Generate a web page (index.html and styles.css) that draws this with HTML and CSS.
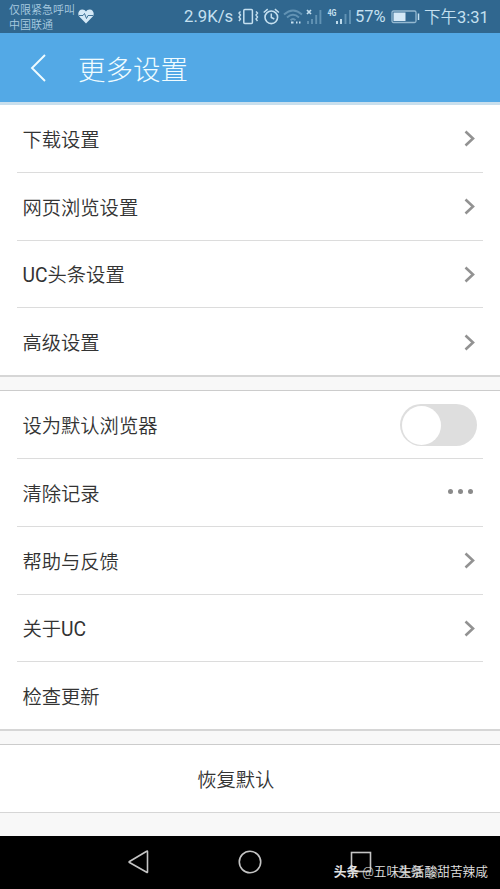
FILE: index.html
```html
<!DOCTYPE html>
<html lang="zh-CN">

<head>
    <meta charset="UTF-8">
    <meta name="viewport" content="width=device-width, initial-scale=1.0">
    <title>更多设置</title>
    <link rel="stylesheet" href="styles.css">
</head>

<body>
    <!-- Status bar -->
    <div class="status-bar">
        <div class="carrier">
            <div>仅限紧急呼叫</div>
            <div>中国联通</div>
        </div>
        <svg class="heart" width="16" height="15" viewBox="0 0 16 15">
            <path d="M8 14.5 1.2 7.5C-1 4.5 1 .5 4.3.5 6 .5 7.3 1.3 8 2.5 8.7 1.3 10 .5 11.7.5 15 .5 17 4.5 14.8 7.5Z" fill="#d4e8f6"/>
            <path d="M1 6.5h4l1.5-2 2 5 1.500-3h5" fill="none" stroke="#30678f" stroke-width="0.9"/>
        </svg>
        <span class="speed">2.9K/s</span>
        <svg class="status-icons" width="116" height="24" viewBox="238 5 116 24" fill="none" stroke="#c5e0f0">
            <!-- vibrate -->
            <rect x="243.8" y="9.5" width="8.6" height="14" rx="1" stroke-width="1.5"/>
            <path d="M240.5 11.5l-1.5 1.5 1.5 2-1.5 2 1.5 2-1.5 2M256 11.5l1.5 1.5-1.5 2 1.5 2-1.5 2 1.5 2" stroke-width="1.4"/>
            <!-- alarm -->
            <circle cx="271.3" cy="17.3" r="6.3" stroke-width="1.6"/>
            <path d="M263.700 12.500l4-3.300M278.900 12.500l-4-3.300M271.300 13.500v4l3 1.500" stroke-width="1.500"/>
            <!-- wifi -->
            <path d="M284 14.500q9-8 18 0M287 17.500q6-5.500 12 0M290.500 20.300q2.500-2.400 5 0" stroke="#6293b4" stroke-width="1.900"/>
            <path d="M291 22.500h2.500M296 22.500h1.500M299 22.500h1.500" stroke-width="2"/>
            <!-- signals -->
            <path d="M307 10l4 4M311 10l-4 4" stroke-width="1.700"/>
            <path d="M308 24v-3M312 24v-5M316.200 24v-9M320.400 24v-14" stroke="#6293b4" stroke-width="1.900"/>
            <path d="M337 24v-3M341 24v-5" stroke-width="1.900"/>
            <path d="M345.500 24v-10M350 24v-14" stroke="#6293b4" stroke-width="1.900"/>
            <text class="network" x="327.500" y="16" textLength="9" lengthAdjust="spacingAndGlyphs">4G</text>
        </svg>
        <span class="percent">57%</span>
        <svg class="battery" width="29" height="14" viewBox="0 0 29 14">
            <rect x="1" y="1" width="24" height="11.500" rx="1.500" fill="none" stroke="#94b9d1" stroke-width="1.300"/>
            <rect x="2.500" y="2.500" width="12" height="8.500" fill="#d4e8f6"/>
            <path d="M27.500 3.500v6.500" stroke="#c5e0f0" stroke-width="1.500"/>
        </svg>
        <span class="clock">下午<span class="latin">3:31</span></span>
    </div>

    <header class="title-bar">
        <svg width="18" height="30" viewBox="0 0 18 30">
            <path d="M16 2 3 15l13 13" fill="none" stroke="#f0fcff" stroke-width="1.900"/>
        </svg>
        <h1>更多设置</h1>
    </header>

    <!-- Settings -->
    <main>
        <div class="group">
            <div class="row">下载设置<svg class="chevron" viewBox="0 0 11 17"><path d="M1.500 1.500l7.500 7-7.500 7"/></svg></div>
            <div class="row">网页浏览设置<svg class="chevron" viewBox="0 0 11 17"><path d="M1.500 1.500l7.500 7-7.500 7"/></svg></div>
            <div class="row"><div><span class="latin">UC</span>头条设置</div><svg class="chevron" viewBox="0 0 11 17"><path d="M1.500 1.500l7.500 7-7.500 7"/></svg></div>
            <div class="row">高级设置<svg class="chevron" viewBox="0 0 11 17"><path d="M1.500 1.500l7.500 7-7.500 7"/></svg></div>
        </div>
        <div class="group">
            <div class="row">设为默认浏览器<span class="toggle"></span></div>
            <div class="row">清除记录<span class="dots"><i></i><i></i><i></i></span></div>
            <div class="row">帮助与反馈<svg class="chevron" viewBox="0 0 11 17"><path d="M1.500 1.500l7.500 7-7.500 7"/></svg></div>
            <div class="row"><div>关于<span class="latin">UC</span></div><svg class="chevron" viewBox="0 0 11 17"><path d="M1.500 1.500l7.500 7-7.500 7"/></svg></div>
            <div class="row">检查更新</div>
        </div>
        <div class="group reset">
            <div class="row">恢复默认</div>
        </div>
    </main>

    <!-- Navigation keys -->
    <nav class="nav-bar">
        <svg width="24" height="24" viewBox="0 0 24 24"><path d="M20.500 1.500v20.500q0 .8-.8.300L2.500 12.500q-.8-.5 0-1L19.700 1.300q.8-.5.800.200Z"/></svg>
        <svg width="24" height="24" viewBox="0 0 24 24"><circle cx="12" cy="12" r="10.700"/></svg>
        <svg width="24" height="24" viewBox="0 0 24 24"><rect x="2.500" y="2.500" width="19" height="19"/></svg>
        <div class="watermark back"><b>头条</b> @</div>
        <div class="watermark"><b>头条</b> @五味生活酸甜苦辣咸</div>
    </nav>
</body>

</html>
```
FILE: styles.css
```css
* {
    box-sizing: border-box;
}

body {
    margin: 0;
    width: 500px;
    height: 889px;
    overflow: hidden;
    display: flex;
    flex-direction: column;
    font-family: Roboto, "Noto Sans CJK SC", sans-serif;
    background-color: #f8f8f8;
    color: #333;
}

.latin {
    font-weight: 400;
}

/* Status bar */
.status-bar {
    flex: none;
    height: 33px;
    display: flex;
    align-items: center;
    padding-left: 9px;
    background-color: #30678f;
    color: #c5e0f0;
    white-space: nowrap;
}

.carrier {
    width: 69px;
    padding-top: 2px;
    font-size: 11px;
    line-height: 15px;
    font-weight: 350;
    color: #a9cbe0;
}

.heart {
    flex: none;
}

.speed {
    width: 54px;
    margin-left: 90px;
    font-size: 16.7px;
}

.status-icons {
    flex: none;
}

.network {
    font-size: 8.5px;
    font-weight: bold;
    fill: #c5e0f0;
    stroke: none;
}

.percent {
    width: 36px;
    margin-left: 1px;
    font-size: 16.5px;
}

.battery {
    flex: none;
}

.clock {
    margin-left: 4px;
    padding-top: 2px;
    font-size: 16.5px;
    line-height: 20px;
    font-weight: 350;
}

/* Title bar */
.title-bar {
    flex: none;
    height: 72px;
    display: flex;
    align-items: center;
    padding-left: 29px;
    background-color: #53a9e6;
    border-bottom: 3px solid #c9dfed;
    color: #f0fcff;
}

.title-bar h1 {
    margin: 0 0 0 31px;
    padding-top: 7px;
    font-size: 27.5px;
    line-height: 40px;
    font-weight: 300;
}

/* Settings list */
main {
    flex: 1;
}

.group {
    margin-bottom: 13px;
    background-color: #fff;
    border-bottom: 2px solid #d6d6d6;
}

.group + .group {
    border-top: 1px solid #ccc;
}

.row {
    height: 67.75px;
    margin: 0 17px;
    padding: 1px 6px 0 5.5px;
    display: flex;
    align-items: center;
    justify-content: space-between;
    border-bottom: 1px solid #dcdcdc;
    font-size: 19.3px;
    font-weight: 350;
}

.row:last-child {
    height: 67px;
    border-bottom: none;
}

.chevron {
    width: 11px;
    height: 17px;
    margin-right: 2px;
    fill: none;
    stroke: #929292;
    stroke-width: 2.6;
}

.toggle {
    width: 77px;
    height: 42px;
    border-radius: 21px;
    background-color: #dedede;
}

.toggle::before {
    content: "";
    display: block;
    width: 39px;
    height: 39px;
    margin: 1.5px;
    border-radius: 50%;
    background-color: #fff;
}

.dots {
    display: flex;
    gap: 5px;
    margin: 0 4px 3px 0;
}

.dots i {
    width: 5px;
    height: 5px;
    border-radius: 50%;
    background-color: #8a8a8a;
}

.group.reset {
    border-bottom-width: 1px;
}

.reset .row {
    justify-content: center;
    padding-top: 0;
    padding-right: 34px;
}

/* Navigation keys */
.nav-bar {
    flex: none;
    position: relative;
    height: 53px;
    display: flex;
    justify-content: center;
    gap: 87px;
    padding-top: 14px;
    background-color: #000;
}

.nav-bar svg {
    fill: none;
    stroke: #c4c4c4;
    stroke-width: 1.6;
}

.watermark {
    position: absolute;
    right: 12px;
    bottom: 7px;
    font-size: 12.7px;
    line-height: 20px;
    font-weight: 350;
    color: #e2e2e2;
    white-space: nowrap;
}

.watermark.back {
    right: 62px;
    color: #aaa;
}
```
